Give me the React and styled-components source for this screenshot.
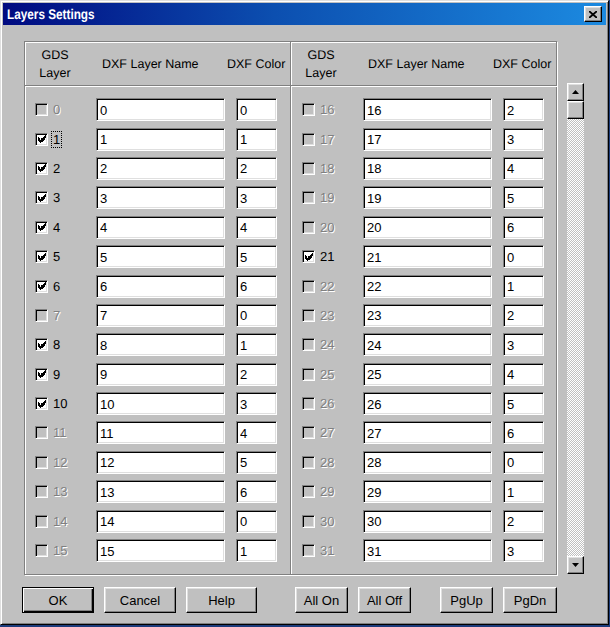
import React, { useState } from 'react';
import styled, { createGlobalStyle, css } from 'styled-components';

const GlobalStyle = createGlobalStyle`
  html, body {
    margin: 0;
    padding: 0;
    background: #1c3c7c;
  }
  body {
    font-family: 'Liberation Sans', Arial, sans-serif;
    font-weight: 400;
    -webkit-font-smoothing: antialiased;
    text-rendering: geometricPrecision;
  }
`;

const raised = css`
  border: 1px solid;
  border-color: #fff #000 #000 #fff;
  box-shadow: inset -1px -1px #808080, inset 1px 1px #dfdfdf;
`;

const sunken = css`
  border: 1px solid;
  border-color: #808080 #fff #fff #808080;
  box-shadow: inset 1px 1px #000, inset -1px -1px #dfdfdf;
`;

const Window = styled.div`
  box-sizing: border-box;
  width: 609px;
  height: 625px;
  background: #c0c0c0;
  border: 1px solid;
  border-color: #dfdfdf #000 #000 #dfdfdf;
  box-shadow: inset 1px 1px #fff, inset -1px -1px #808080;
  padding: 2px;
  display: flex;
  flex-direction: column;
`;

const TitleBar = styled.div`
  height: 22px;
  display: flex;
  align-items: center;
  justify-content: space-between;
  padding: 0 4px 0 4px;
  background: linear-gradient(90deg, #000a80 0%, #0c4fb0 45%, #1c8ae0 100%);
`;

const Title = styled.span`
  color: #fff;
  font-family: 'Liberation Sans', Arial, sans-serif;
  font-weight: bold;
  font-size: 14px;
  transform: scaleX(0.84);
  transform-origin: left center;
  white-space: nowrap;
`;

const CloseButton = styled.button`
  box-sizing: border-box;
  width: 18px;
  height: 16px;
  padding: 0;
  background: #c0c0c0;
  ${raised};
  display: flex;
  align-items: center;
  justify-content: center;
`;

const Body = styled.div`
  padding: 16px 0 0 19px;
  display: flex;
  flex-direction: column;
`;

const MainRow = styled.div`
  display: flex;
  align-items: flex-start;
`;

const Panel = styled.div`
  box-sizing: border-box;
  margin-left: 2px;
  width: 533px;
  height: 534px;
  border: 1px solid #808080;
  box-shadow: inset 1px 1px #fff, 1px 1px #fff;
  display: grid;
  grid-template-columns: 265px 267px;
`;

const Half = styled.div`
  display: flex;
  flex-direction: column;
  ${(p) =>
    p.$divided &&
    css`
      border-left: 1px solid #808080;
      box-shadow: inset 1px 0 #fff;
    `}
`;

const Header = styled.div`
  box-sizing: border-box;
  height: 44px;
  border-bottom: 1px solid #808080;
  box-shadow: 0 1px 0 #fff;
  display: flex;
  align-items: center;
  font-size: 12.5px;
  color: #000;
`;

const HeadCell = styled.div`
  width: ${(p) => p.$w}px;
  margin-left: ${(p) => p.$ml || 0}px;
  text-align: ${(p) => p.$align || 'left'};
  line-height: 18px;
  white-space: nowrap;
`;

const RowList = styled.div`
  padding-top: 9px;
  display: flex;
  flex-direction: column;
`;

const Row = styled.div`
  height: 29.4px;
  display: flex;
  align-items: center;
  padding-left: ${(p) => (p.$divided ? 11 : 10)}px;
`;

const Check = styled.span`
  box-sizing: border-box;
  width: 13px;
  height: 13px;
  background: ${(p) => (p.$on ? '#fff' : '#c0c0c0')};
  ${sunken};
  display: flex;
  align-items: center;
  justify-content: center;
  cursor: default;
`;

const Num = styled.span`
  width: 44px;
  margin-left: 4px;
  font-size: 13px;
  font-weight: normal;
  color: ${(p) => (p.$on ? '#000' : '#808080')};
  text-shadow: ${(p) => (p.$on ? 'none' : '1px 1px 0 #fff')};
  span {
    padding: 0 1px;
    outline: ${(p) => (p.$focus ? '1px dotted #000' : 'none')};
  }
`;

const Field = styled.input`
  box-sizing: border-box;
  width: ${(p) => p.$w}px;
  height: 23px;
  margin-left: ${(p) => p.$ml || 0}px;
  padding: 1px 3px 0;
  background: #fff;
  ${sunken};
  font-family: 'Liberation Sans', Arial, sans-serif;
  font-size: 13px;
  color: #000;
  outline: none;
`;

const ScrollBar = styled.div`
  margin: 42px 0 0 10px;
  width: 17px;
  height: 491px;
  display: flex;
  flex-direction: column;
`;

const ScrollButton = styled.div`
  box-sizing: border-box;
  width: 17px;
  height: 18px;
  background: #c0c0c0;
  ${raised};
  display: flex;
  align-items: center;
  justify-content: center;
`;

const Track = styled.div`
  flex: 1;
  background-color: #fff;
  background-image: repeating-conic-gradient(#c0c0c0 0 25%, #fff 0 50%);
  background-size: 2px 2px;
`;

const ButtonRow = styled.div`
  display: flex;
  margin-top: 12px;
`;

const Group = styled.div`
  display: flex;
  gap: 10px;
  margin-left: ${(p) => p.$ml || 0}px;
`;

const Button = styled.button`
  box-sizing: border-box;
  width: ${(p) => p.$w}px;
  height: 26px;
  padding: 0;
  background: #c0c0c0;
  font-family: 'Liberation Sans', Arial, sans-serif;
  font-size: 13px;
  color: #000;
  ${raised};
  ${(p) =>
    p.$default &&
    css`
      border: 1px solid #000;
      box-shadow: inset 1px 1px #fff, inset -1px -1px #000, inset -2px -2px #808080;
    `}
`;

const Tick = () => (
  <svg width="8" height="8" viewBox="0 0 7 7" shapeRendering="crispEdges">
    <path
      d="M6 0h1v1h-1z M5 1h2v1h-2z M0 2h1v1h-1z M4 2h3v1h-3z M0 3h2v1h-2z M3 3h3v1h-3z M0 4h5v1h-5z M1 5h3v1h-3z M2 6h1v1h-1z"
      fill="#000"
    />
  </svg>
);

const Arrow = ({ down }) => (
  <svg width="7" height="4" viewBox="0 0 7 4">
    <path d={down ? 'M0 0 H7 L3.5 4 Z' : 'M0 4 H7 L3.5 0 Z'} fill="#000" />
  </svg>
);

const initial = [1, 2, 3, 4, 5, 6, 8, 9, 10, 21];

const LayerRow = ({ n, on, divided, onToggle }) => (
  <Row $divided={divided}>
    <Check $on={on} onClick={onToggle}>
      {on && <Tick />}
    </Check>
    <Num $on={on} $focus={n === 1}>
      <span>{n}</span>
    </Num>
    <Field $w={129} defaultValue={String(n)} />
    <Field $w={41} $ml={11} defaultValue={String(n % 7)} />
  </Row>
);

const Column = ({ start, divided, checked, toggle }) => (
  <Half $divided={divided}>
    <Header>
      <HeadCell $w={60} $align="center">
        GDS
        <br />
        Layer
      </HeadCell>
      <HeadCell $w={125} $ml={17}>
        DXF Layer Name
      </HeadCell>
      <HeadCell $w={60}>DXF Color</HeadCell>
    </Header>
    <RowList>
      {Array.from({ length: 16 }, (_, i) => start + i).map((n) => (
        <LayerRow
          key={n}
          n={n}
          divided={divided}
          on={checked.includes(n)}
          onToggle={() => toggle(n)}
        />
      ))}
    </RowList>
  </Half>
);

export default function App() {
  const [checked, setChecked] = useState(initial);

  const toggle = (n) =>
    setChecked((c) => (c.includes(n) ? c.filter((x) => x !== n) : [...c, n]));

  return (
    <>
      <GlobalStyle />
      <Window>
        <TitleBar>
          <Title>Layers Settings</Title>
          <CloseButton>
            <svg width="8" height="7" viewBox="0 0 8 7">
              <path d="M0 0 L8 7 M8 0 L0 7" stroke="#000" strokeWidth="1.8" />
            </svg>
          </CloseButton>
        </TitleBar>
        <Body>
          <MainRow>
            <Panel>
              <Column start={0} checked={checked} toggle={toggle} />
              <Column start={16} divided checked={checked} toggle={toggle} />
            </Panel>
            <ScrollBar>
              <ScrollButton>
                <Arrow />
              </ScrollButton>
              <ScrollButton />
              <Track />
              <ScrollButton>
                <Arrow down />
              </ScrollButton>
            </ScrollBar>
          </MainRow>
          <ButtonRow>
            <Group>
              <Button $w={72} $default>OK</Button>
              <Button $w={72}>Cancel</Button>
              <Button $w={71}>Help</Button>
            </Group>
            <Group $ml={38}>
              <Button $w={53}>All On</Button>
              <Button $w={53}>All Off</Button>
            </Group>
            <Group $ml={29}>
              <Button $w={53}>PgUp</Button>
              <Button $w={54}>PgDn</Button>
            </Group>
          </ButtonRow>
        </Body>
      </Window>
    </>
  );
}
